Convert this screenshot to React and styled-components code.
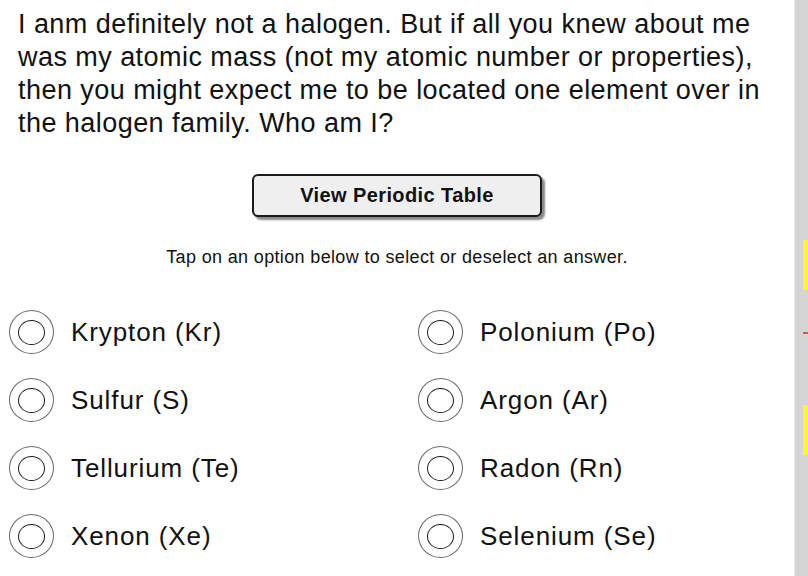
import React from 'react'
import styled, { createGlobalStyle } from "styled-components";

const GlobalStyle = createGlobalStyle`
html, body{
    margin: 0;
    padding: 0;
    background: #fff;
}
body{
    font-family: "Liberation Sans", Arial, sans-serif;
    color: #111;
}
`;

const Page = styled.div`
display: flex;
width: 808px;
height: 576px;
overflow: hidden;
`;

const Main = styled.div`
flex: 1;
display: flex;
flex-direction: column;
padding-top: 8px;
`;

const Question = styled.p`
margin: 0 0 0 18px;
font-size: 27px;
line-height: 33px;
letter-spacing: 0.45px;
width: 765px;
`;

const ButtonRow = styled.div`
display: flex;
justify-content: center;
padding-top: 34px;
width: 794px;
`;

const TableButton = styled.button`
width: 290px;
height: 43px;
padding: 0;
border: 2px solid #1a1a1a;
border-radius: 6px;
background: #efefef;
box-shadow: 3px 3px 2px #8a8a8a;
font-family: "Liberation Sans", Arial, sans-serif;
font-weight: bold;
font-size: 20px;
letter-spacing: 0.4px;
color: #111;
`;

const Hint = styled.div`
margin-top: 29px;
width: 794px;
text-align: center;
font-size: 18px;
line-height: 22px;
letter-spacing: 0.35px;
`;

const Options = styled.div`
display: grid;
grid-template-columns: 409px 370px;
row-gap: 24px;
margin: 42px 0 0 9px;
`;

const Option = styled.div`
display: flex;
align-items: center;
gap: 17px;
height: 44px;
font-size: 26px;
letter-spacing: 0.9px;
`;

const Radio = styled.span`
display: flex;
align-items: center;
justify-content: center;
width: 45px;
height: 44px;
border: 1px solid #6a6a6a;
border-radius: 50%;
box-sizing: border-box;
flex-shrink: 0;
&::after{
    content: "";
    width: 27px;
    height: 25px;
    border: 1.5px solid #1e1e1e;
    border-radius: 50%;
    box-sizing: border-box;
}
`;

const Side = styled.div`
width: 18px;
background: #d5d5d5;
border-left: 1px solid #ececec;
position: relative;
`;

const Marker = styled.div`
position: absolute;
right: 0;
top: ${props => props.top}px;
width: 5px;
height: ${props => props.h}px;
background: ${props => props.color};
`;

const options = [
    "Krypton (Kr)", "Polonium (Po)",
    "Sulfur (S)", "Argon (Ar)",
    "Tellurium (Te)", "Radon (Rn)",
    "Xenon (Xe)", "Selenium (Se)"
]

const App = () => {
    return (
        <Page>
            <GlobalStyle />
            <Main>
                <Question>
                    I anm definitely not a halogen. But if all you knew about me was my atomic mass (not my atomic number or properties), then you might expect me to be located one element over in the halogen family. Who am I?
                </Question>
                <ButtonRow>
                    <TableButton>View Periodic Table</TableButton>
                </ButtonRow>
                <Hint>Tap on an option below to select or deselect an answer.</Hint>
                <Options>
                    {options.map(o => (
                        <Option key={o}>
                            <Radio />
                            {o}
                        </Option>
                    ))}
                </Options>
            </Main>
            <Side>
                <Marker top={240} h={50} color="#f7f53c" />
                <Marker top={332} h={2} color="#d9534f" />
                <Marker top={405} h={50} color="#f7f53c" />
            </Side>
        </Page>
    )
}

export default App
